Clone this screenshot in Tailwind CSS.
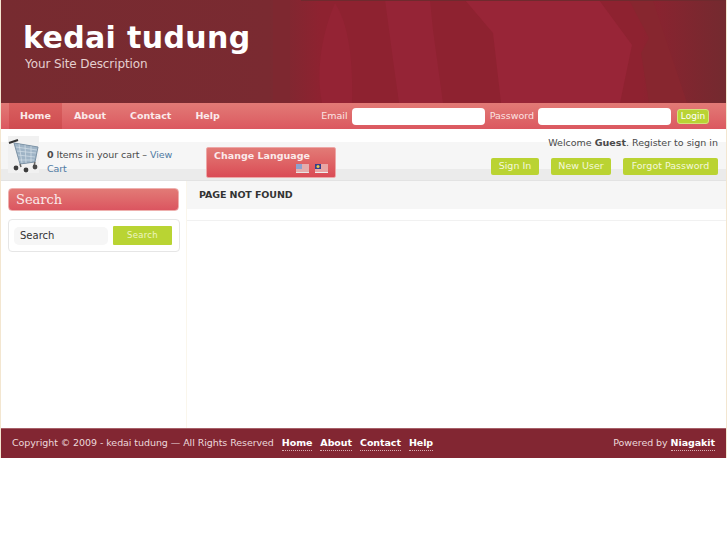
<!DOCTYPE html>
<html><head><meta charset="utf-8"><script src="https://cdn.jsdelivr.net/npm/@tailwindcss/browser@4"></script></head>
<body class="bg-white font-['DejaVu_Sans',sans-serif] text-[9.5px] text-[#4a4a4a]">
<div class="w-[727px] h-[458px] flex flex-col border-x border-[#f3e6d0]">
  <header class="relative h-[103px] shrink-0 bg-[#772b30] overflow-hidden">
    <svg class="absolute inset-0" width="727" height="103" viewBox="0 0 727 103">
      <defs><linearGradient id="g" x1="0" x2="1" y1="0" y2="0"><stop offset="0" stop-color="#772b30"/><stop offset="0.37" stop-color="#7a2a31"/><stop offset="0.44" stop-color="#8e2230"/><stop offset="0.88" stop-color="#8e2230"/><stop offset="1" stop-color="#732a2f"/></linearGradient></defs>
      <rect width="727" height="103" fill="url(#g)"/>
      <path d="M272 0h17v103h-17z" fill="#7e2830"/>
      <path d="M334 3C322 30 314 70 321 103h30C352 60 348 25 334 3z" fill="#942334"/>
      <path d="M384 0h45l3 30 10 73h-44L392 60z" fill="#952436"/>
      <path d="M464 0h90l44 0 33 45-12 58H500l-8-70z" fill="#982537"/>
      <path d="M628 0h24l34 103h-38l-8-50 8-15z" fill="#87262f"/>
      <rect width="427" height="1" y="0" x="300" fill="#6f2a2e"/>
    </svg>
    <div class="relative pl-[22px] pt-[19px]">
      <h1 class="text-[30px] leading-[38px] font-bold text-white tracking-[0.35px]">kedai tudung</h1>
      <p class="text-[12px] leading-[16px] text-[#e5cfcf] pl-[2px] tracking-[-0.1px] -mt-[1px]">Your Site Description</p>
    </div>
  </header>
  <nav class="h-[26px] shrink-0 flex items-center justify-between bg-gradient-to-b from-[#e27a76] to-[#db5860] pl-[8px] pr-[17px] text-white">
    <ul class="flex font-bold h-full items-center text-[#fbeaea]">
      <li class="h-full w-[53px] flex items-center justify-center bg-gradient-to-b from-[#d9605f] to-[#cf4b50]">Home</li>
      <li class="ml-[12px]">About</li>
      <li class="ml-[24px]">Contact</li>
      <li class="ml-[24px]">Help</li>
    </ul>
    <div class="flex items-center text-[#fbe3e3]">
      <span>Email</span>
      <span class="ml-[4px] w-[133px] h-[17px] bg-white rounded-[4px]"></span>
      <span class="ml-[5px]">Password</span>
      <span class="ml-[4px] w-[133px] h-[17px] bg-white rounded-[4px]"></span>
      <span class="ml-[6px] w-[32px] h-[15px] flex items-center justify-center bg-[#b9d334] border border-[#d3e37a] rounded-[3px] text-[9px] leading-[15px] pt-[1px] text-white">Login</span>
    </div>
  </nav>
  <section class="relative h-[52px] shrink-0 flex">
    <div class="absolute left-0 right-0 top-[13px] bottom-0 bg-[#f6f6f6] flex flex-col justify-end">
      <div class="h-[12px] bg-[#ebebeb] border-b border-[#e3e3e3]"></div>
    </div>
    <div class="relative ml-[7px] mt-[7px] w-[32px] h-[37px]">
      <svg width="32" height="37" viewBox="0 0 32 37">
        <rect width="31" height="37" fill="#f1f1f1"/>
        <path d="M1 7 L10 4" stroke="#333" stroke-width="2"/>
        <path d="M6 7 L30 11 L27 26 L12 28 Z" fill="#9fb4c6" stroke="#7d93a6"/>
        <path d="M8 11l21 3M9 15l19 2M10 19l17 2M11 24l15 0M11 8l3 19M17 9l1 18M23 10l0 16" stroke="#d4dfe8" stroke-width="0.7" fill="none"/>
        <path d="M12 28 L13 31 M27 26 L26 30" stroke="#666" stroke-width="1.5"/>
        <circle cx="8" cy="32" r="2.4" fill="#3d3d3d"/><circle cx="27" cy="31" r="2.4" fill="#4a4a4a"/><circle cx="18" cy="34" r="2.4" fill="#3d3d3d"/>
      </svg>
    </div>
    <p class="relative ml-[7px] mt-[19px] w-[130px] leading-[14px] h-[28px] tracking-[-0.08px]"><b>0</b> Items in your cart – <span class="text-[#4f7aa3]">View Cart</span></p>
    <div class="relative ml-[29px] mt-[18px] w-[130px] h-[31px] rounded-[2px] bg-gradient-to-b from-[#e27a76] to-[#da4a55] border border-[#eda7a7] text-[#fbeaea]">
      <p class="font-bold pl-[7px] leading-[14px] pt-[1px]">Change Language</p>
      <div class="flex justify-end gap-[6px] pr-[7px] mt-[1px]">
        <svg width="13" height="9" viewBox="0 0 13 9"><rect width="13" height="9" fill="#e8e4e4"/><path d="M0 1h13M0 3h13M0 5h13M0 7h13" stroke="#e07777"/><rect width="6" height="5" fill="#8ca2cf"/></svg>
        <svg width="13" height="9" viewBox="0 0 13 9"><rect width="13" height="9" fill="#eee"/><path d="M0 1h13M0 3h13M0 5h13M0 7h13" stroke="#e35d5d"/><rect width="6" height="5" fill="#34408c"/><circle cx="3" cy="2.5" r="1.5" fill="#e7c94a"/></svg>
      </div>
    </div>
    <div class="relative ml-auto mr-[8px] flex flex-col items-end pt-[7px]">
      <p class="leading-[13px]">Welcome <b>Guest</b>. Register to sign in</p>
      <div class="flex gap-[12px] mt-[9px] text-[#f4f8dc]">
        <span class="h-[17px] w-[48px] flex items-center justify-center bg-[#bad332] rounded-[2px]">Sign In</span>
        <span class="h-[17px] w-[60px] flex items-center justify-center bg-[#bad332] rounded-[2px]">New User</span>
        <span class="h-[17px] w-[95px] flex items-center justify-center bg-[#bad332] rounded-[2px]">Forgot Password</span>
      </div>
    </div>
  </section>
  <main class="flex-1 flex">
    <aside class="w-[186px] shrink-0 border-r border-[#faf6ec] pl-[7px] pr-[7px] pt-[7px]">
      <h3 class="h-[23px] w-[171px] rounded-[4px] bg-gradient-to-b from-[#e27a76] to-[#db5560] border border-[#eeb0ae] pl-[7px] font-['DejaVu_Serif',serif] font-normal text-[13px] leading-[21px] text-[#fbeaea]">Search</h3>
      <div class="mt-[8px] w-[172px] h-[33px] rounded-[4px] border border-[#e6e6e6] flex items-center pl-[5px]">
        <span class="w-[94px] h-[18px] rounded-[5px] bg-[#f6f6f6] pl-[6px] text-[10px] leading-[18px] text-[#333]">Search</span>
        <span class="ml-[5px] w-[59px] h-[19px] bg-[#b9d433] text-[8.5px] tracking-[0.3px] flex items-center justify-center text-[#eef5c2] rounded-[1px]">Search</span>
      </div>
    </aside>
    <article class="flex-1">
      <div class="h-[28px] bg-[#f6f6f6] pl-[12px] pt-[7px] font-bold text-[#333] leading-[13px] uppercase tracking-[-0.1px]">Page not found</div>
      <div class="mt-[11px] h-[1px] bg-[#f1f1f1]"></div>
    </article>
  </main>
  <footer class="h-[30px] shrink-0 flex items-center justify-between bg-[#822632] border-t border-[#a66068] pl-[11px] pr-[11px] pb-[1px] text-[#ecd9db] tracking-[-0.07px]">
    <div class="flex items-center">
      <span>Copyright © 2009 - kedai tudung — All Rights Reserved</span>
      <a class="ml-[8px] font-bold text-white border-b border-dotted border-[#d9b0b4] leading-[15px]">Home</a>
      <a class="ml-[8px] font-bold text-white border-b border-dotted border-[#d9b0b4] leading-[15px]">About</a>
      <a class="ml-[8px] font-bold text-white border-b border-dotted border-[#d9b0b4] leading-[15px]">Contact</a>
      <a class="ml-[8px] font-bold text-white border-b border-dotted border-[#d9b0b4] leading-[15px]">Help</a>
    </div>
    <div class="flex items-center"><span>Powered by</span><a class="ml-[3px] font-bold text-white border-b border-dotted border-[#d9b0b4] leading-[15px]">Niagakit</a></div>
  </footer>
</div>
</body></html>
